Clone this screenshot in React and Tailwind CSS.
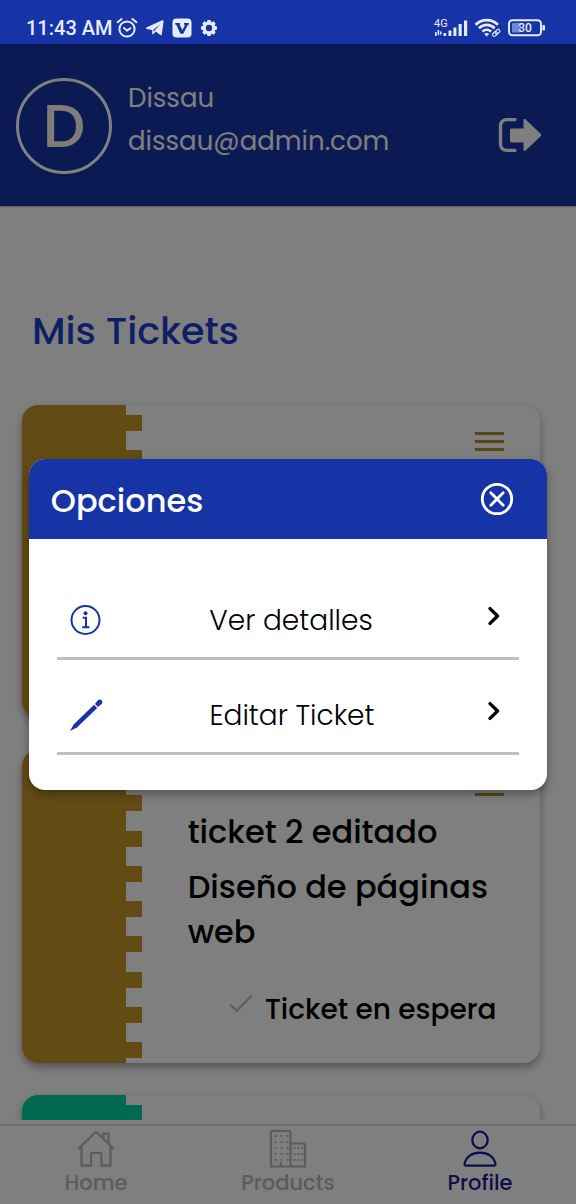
import React from "react";

const GOLD = "bg-[#c69628]";
const GREEN = "bg-[#00d4a0]";

function AlarmIcon() {
  return (
    <svg width="22" height="22" viewBox="0 0 22 22" fill="none" stroke="currentColor" strokeWidth="2" strokeLinecap="round" aria-hidden="true">
      <circle cx="11" cy="12" r="7.6" />
      <path d="M1.6 5.2 5.6 2M20.4 5.2 16.4 2" />
      <path d="m8 11 3 2.6 3.4-2.4" strokeLinejoin="round" />
    </svg>
  );
}

function TelegramIcon() {
  return (
    <svg width="18" height="18" viewBox="0 0 18 18" fill="currentColor" aria-hidden="true">
      <path d="M17.600 2.200 15.800 15.200c-.2 1-1 1.200-1.800.6L9.800 12.600l-2.500 2.500c-.5.5-1.100.3-1.100-.4V11L.8 9.900c-1-.3-1-1.100 0-1.600L16.200 1.300c.8-.4 1.500 0 1.400.9ZM7.400 10.800l.3 2 .9-1.400 5.500-6.200-6.700 5.600Z" />
    </svg>
  );
}

function VBadgeIcon() {
  return (
    <svg width="20" height="20" viewBox="0 0 20 20" aria-hidden="true">
      <rect x=".5" y=".5" width="19" height="19" rx="4" fill="currentColor" />
      <path d="M3.200 5h5v1.500h-.6l2.800 5.600 2.100-4.100c.4-.9.300-1.300-.5-1.500V5h4.800v1.400c-.7.2-1.100.7-1.500 1.500L11.200 15.800H8.400L4.400 7c-.2-.4-.6-.5-1.200-.6V5Z" fill="#1634a5" />
    </svg>
  );
}

function GearIcon() {
  const teeth = [0, 45, 90, 135, 180, 225, 270, 315];
  return (
    <svg width="18" height="18" viewBox="0 0 18 18" aria-hidden="true">
      {teeth.map((a) => (
        <rect key={a} x="7" y="1" width="4" height="4" rx="1.200" fill="currentColor" transform={`rotate(${a} 9 9)`} />
      ))}
      <circle cx="9" cy="9" r="4.700" fill="none" stroke="currentColor" strokeWidth="3" />
    </svg>
  );
}

function SignalIcon() {
  return (
    <svg width="34" height="22" viewBox="0 0 34 22" fill="currentColor" aria-hidden="true">
      <text x="0" y="10" fontSize="11" fontFamily="Roboto, sans-serif">4G</text>
      <path d="M1 15h1.600v4H1zM3.600 13h1.600v5H3.600zM6 14.500h1.500v3H6zM9.500 16h2.700v3H9.500zM14.500 13.500h2.900V19h-2.900zM19.400 10.500h3V19h-3zM24.600 7h3.100v12h-3.100zM30 3.500h3.200V19H30z" />
    </svg>
  );
}

function WifiLinkIcon() {
  return (
    <svg width="28" height="20" viewBox="0 0 28 20" fill="none" stroke="currentColor" aria-hidden="true">
      <path d="M1.500 6.800C8 .6 17.500.6 24 6.800" strokeWidth="2.600" />
      <path d="M4.900 10.200c4.800-4.400 11-4.400 15.800 0" strokeWidth="2.600" />
      <path d="M8.400 13.600c2.700-2.300 6-2.300 8.700 0" strokeWidth="2.600" />
      <path d="M12.700 18.600 10.200 15.800c1.500-1.200 3.500-1.200 5 0Z" fill="currentColor" stroke="none" />
      <rect x="18.200" y="14.200" width="5.400" height="3.400" rx="1.700" transform="rotate(-45 21 16)" strokeWidth="1.100" />
      <rect x="20.800" y="12" width="5.400" height="3.400" rx="1.700" transform="rotate(-45 23.500 13.700)" strokeWidth="1.100" />
    </svg>
  );
}

function BatteryIcon() {
  return (
    <svg width="38" height="18" viewBox="0 0 38 18" fill="none" aria-hidden="true">
      <rect x="1" y="1.200" width="32" height="15" rx="3.500" stroke="currentColor" strokeWidth="2" />
      <rect x="4" y="4" width="9" height="9.500" rx="1" fill="#6f87d6" />
      <rect x="34.400" y="6" width="2.600" height="5.500" rx="1" fill="currentColor" />
      <text x="17" y="13" textAnchor="middle" fontSize="12" fontFamily="Roboto, sans-serif" fontWeight="500" fill="currentColor">30</text>
    </svg>
  );
}

function LogoutIcon() {
  return (
    <svg width="44" height="36" viewBox="0 0 44 36" aria-hidden="true">
      <path d="M17 2.600H8.500a6 6 0 0 0-6 6v18.800a6 6 0 0 0 6 6H17" fill="none" stroke="currentColor" strokeWidth="3.400" strokeLinecap="round" />
      <path d="M12 13.200c0-1 .6-1.600 1.600-1.600H25.500V3.200c0-1.200 1.200-1.700 2.100-.8l15 14.400c.8.800.8 1.600 0 2.400l-15 14.400c-.9.900-2.100.4-2.100-.8v-7.400H13.600c-1 0-1.600-.6-1.600-1.600Z" fill="currentColor" />
    </svg>
  );
}

function CloseIcon() {
  return (
    <svg width="34" height="34" viewBox="0 0 34 34" fill="none" stroke="currentColor" strokeWidth="2.800" strokeLinecap="round" aria-hidden="true">
      <circle cx="17" cy="17" r="14.700" />
      <path d="m10.800 10.800 12.400 12.400M23.200 10.800 10.800 23.200" />
    </svg>
  );
}

function InfoIcon() {
  return (
    <svg width="32" height="32" viewBox="0 0 32 32" fill="none" stroke="currentColor" strokeWidth="2" aria-hidden="true">
      <circle cx="16.500" cy="16" r="14" />
      <circle cx="16.500" cy="9.200" r="2" fill="currentColor" stroke="none" />
      <path d="M13.700 13.800H17V23M13.100 23.200h7.300" />
    </svg>
  );
}

function PencilIcon() {
  return (
    <svg width="34" height="34" viewBox="0 0 34 34" fill="currentColor" aria-hidden="true">
      <path d="M1 33 4.600 26.600 25 6.800l3.200 3.200L8 29.600Z" />
      <path d="M26 5.900 27.800 3.600c1.200-2.300 3.700-2.800 5-1.200 1.200 1.600.5 3.700-1.600 4.700L29.100 9.100Z" />
    </svg>
  );
}

function ChevronIcon() {
  return (
    <svg width="22" height="20" viewBox="0 0 22 20" fill="none" stroke="currentColor" strokeWidth="3.400" strokeLinecap="round" strokeLinejoin="round" aria-hidden="true">
      <path d="m5 2.600 7.600 7.400L5 17.400" />
    </svg>
  );
}

function CheckIcon() {
  return (
    <svg width="24" height="20" viewBox="0 0 24 20" fill="none" stroke="currentColor" strokeWidth="2.200" aria-hidden="true">
      <path d="m1.200 10.800 6.800 6L22.800 1.600" />
    </svg>
  );
}

function HomeIcon() {
  return (
    <svg width="38" height="38" viewBox="0 0 38 38" fill="none" stroke="currentColor" strokeWidth="2.300" strokeLinejoin="round" strokeLinecap="round" aria-hidden="true">
      <path d="M4.500 17.500v18H14V24.500c0-1 .6-1.600 1.600-1.600h7.200c1 0 1.600.6 1.600 1.600v11H33.500v-18" />
      <path d="M1.800 18.600 17.600 3c1-.9 1.900-.9 2.900 0l15.800 15.600" />
      <path d="M26.500 8.300V3.600h5v9.700" />
    </svg>
  );
}

function BuildingsIcon() {
  const tall = [5.5, 11.5, 17.5];
  const low = [24.5, 28.5, 32.5];
  return (
    <svg width="38" height="38" viewBox="0 0 38 38" fill="none" stroke="currentColor" strokeWidth="2.200" aria-hidden="true">
      <path d="M2 36.500V2.500A1.500 1.500 0 0 1 3.500 1h16.500a1.500 1.500 0 0 1 1.500 1.500v34ZM21.500 13.500h13a1.500 1.500 0 0 1 1.500 1.500v21.500H21.500" />
      <path d="M12 36v-4" />
      <g fill="currentColor" stroke="none">
        {[5, 11, 17, 23, 29].map((y) => tall.map((x) => <rect key={`${x}-${y}`} x={x} y={y} width="2" height="2" />))}
        {[17, 23, 29].map((y) => low.map((x) => <rect key={`${x}-${y}`} x={x} y={y} width="1.800" height="2" />))}
      </g>
    </svg>
  );
}

function PersonIcon() {
  return (
    <svg width="38" height="38" viewBox="0 0 38 38" fill="none" stroke="currentColor" strokeWidth="2.200" strokeLinejoin="round" aria-hidden="true">
      <ellipse cx="19" cy="10" rx="7.700" ry="8.300" />
      <path d="M4.800 35.600c-1 0-1.500-.6-1.300-1.600C5 27 11 22.600 19 22.600S33 27 34.500 34c.2 1-.3 1.600-1.300 1.600Z" />
    </svg>
  );
}

function TicketCard({ color, children }) {
  return (
    <article className="flex min-h-[313px] shrink-0 overflow-hidden rounded-2xl bg-white shadow-[0_4px_8px_rgba(0,0,0,0.35)]">
      <div className={`w-1/5 shrink-0 ${color}`} />
      <div className="flex w-4 shrink-0 flex-col justify-between pt-[10px] pb-[5px]">
        {Array.from({ length: 9 }, (_, i) => (
          <span key={i} className={`h-4 ${color}`} />
        ))}
      </div>
      <div className="flex min-w-0 flex-1 flex-col pl-[46px]">
        <button type="button" aria-label="Opciones" className="mt-[27px] mr-9 flex flex-col gap-[5px] self-end">
          <span className="h-[3px] w-[29px] bg-[#b08a34]" />
          <span className="h-[3px] w-[29px] bg-[#b08a34]" />
          <span className="h-[3px] w-[29px] bg-[#b08a34]" />
        </button>
        {children}
      </div>
    </article>
  );
}

function OptionRow({ icon, label }) {
  return (
    <button type="button" className="flex h-[95px] w-full items-center justify-between border-b-[3px] border-[#bfbfbf] pt-[18px] pr-3 pl-3 text-black">
      <span className="text-[#1634a5]">{icon}</span>
      <span className="pt-[2px] pr-1 text-[28px] leading-10 font-light">{label}</span>
      <span className="mb-2">
        <ChevronIcon />
      </span>
    </button>
  );
}

function NavItem({ icon, label, className }) {
  return (
    <a href="#" className={`flex flex-1 flex-col items-center pt-1 text-[21px] leading-[30px] font-medium ${className}`}>
      {icon}
      {label}
    </a>
  );
}

export default function App() {
  return (
    <div className="flex h-screen flex-col overflow-hidden bg-white font-['Poppins','Inter',sans-serif]">
      <div className="flex h-11 shrink-0 items-center justify-between bg-[#1634a5] pt-3 pr-[30px] pl-[26px] text-[#e6ecff]">
        <div className="flex items-center">
          <span className="font-[Roboto,sans-serif] text-xl font-medium">11:43 AM</span>
          <div className="ml-1 flex items-center gap-2">
            <AlarmIcon />
            <TelegramIcon />
            <VBadgeIcon />
            <GearIcon />
          </div>
        </div>
        <div className="flex items-center gap-[6px]">
          <SignalIcon />
          <WifiLinkIcon />
          <BatteryIcon />
        </div>
      </div>

      <div className="relative flex min-h-0 flex-1 flex-col">
        <header className="flex h-[162px] shrink-0 items-start bg-[#1634a5] pt-[34px] pr-[34px] pl-4 text-white shadow-[0_1px_2px_rgba(0,0,0,0.3)]">
          <div className="flex size-24 shrink-0 items-center justify-center rounded-full border-[3px] border-white text-[60px] font-medium text-[#fff8f0]">
            D
          </div>
          <div className="-mt-px ml-4 text-[26px] leading-[43px]">
            <p>Dissau</p>
            <p>dissau@admin.com</p>
          </div>
          <button type="button" aria-label="Cerrar sesión" className="mt-[39px] ml-auto">
            <LogoutIcon />
          </button>
        </header>

        <main className="min-h-0 flex-1 overflow-hidden">
          <h1 className="mt-[98px] ml-8 text-[38px] leading-[54px] font-medium text-[#1c3fd0]">Mis Tickets</h1>
          <section className="mt-[47px] ml-[22px] flex w-[90%] flex-col gap-8">
            <TicketCard color={GOLD} />
            <TicketCard color={GOLD}>
              <div className="mt-[13px] text-[32px] leading-[45px] font-medium text-black">
                <h2>ticket 2 editado</h2>
                <p className="mt-[10px] pr-8">Diseño de páginas web</p>
              </div>
              <p className="mt-9 mr-11 flex items-start justify-end gap-3 text-[28px] leading-10 font-medium whitespace-nowrap text-black">
                <span className="mt-1 text-[#bcb8b8]">
                  <CheckIcon />
                </span>
                Ticket en espera
              </p>
            </TicketCard>
            <TicketCard color={GREEN} />
          </section>
        </main>

        <nav className="mt-1 flex h-20 shrink-0 border-t-2 border-[#e4dfe0] bg-white">
          <NavItem icon={<HomeIcon />} label="Home" className="text-[#bcb6b8]" />
          <NavItem icon={<BuildingsIcon />} label="Products" className="text-[#bcb6b8]" />
          <NavItem icon={<PersonIcon />} label="Profile" className="text-[#1c1c96]" />
        </nav>

        <div className="absolute inset-0 flex items-center justify-center bg-black/50">
          <div role="dialog" aria-labelledby="options-title" className="w-[90%] overflow-hidden rounded-2xl bg-white shadow-[0_4px_10px_rgba(0,0,0,0.35)]">
            <div className="flex h-20 items-center justify-between bg-[#1634a5] pr-[33px] pl-[22px] text-white">
              <h2 id="options-title" className="mt-1 text-[32px] font-medium">Opciones</h2>
              <button type="button" aria-label="Cerrar">
                <CloseIcon />
              </button>
            </div>
            <div className="px-7 pt-[26px] pb-[35px]">
              <OptionRow icon={<InfoIcon />} label="Ver detalles" />
              <OptionRow icon={<PencilIcon />} label="Editar Ticket" />
            </div>
          </div>
        </div>
      </div>
    </div>
  );
}
